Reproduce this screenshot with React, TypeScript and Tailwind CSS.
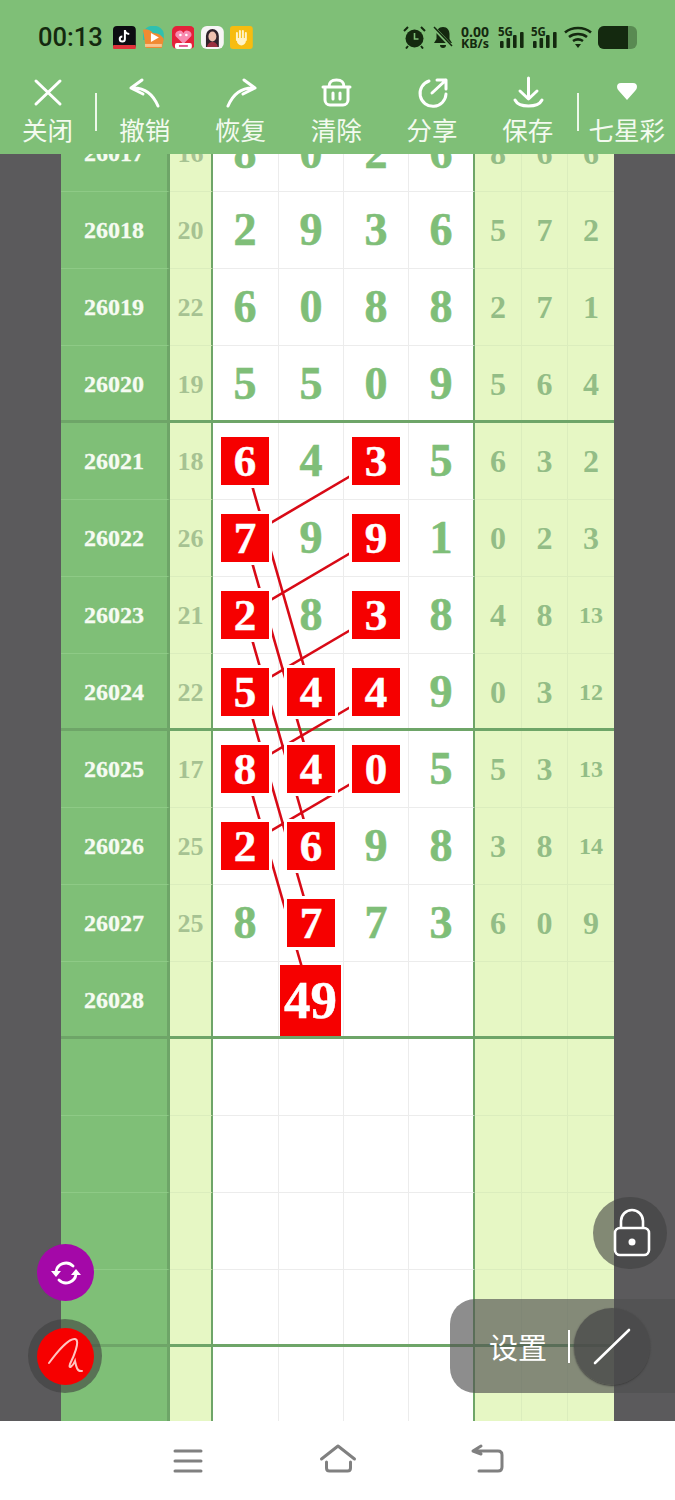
import React from 'react';

type Row = { id: string; sum: string; main: string[]; tail: string[]; thick?: boolean };

const rows: Row[] = [
  { id: '26017', sum: '16', main: ['8', '0', '2', '6'], tail: ['8', '6', '6'] },
  { id: '26018', sum: '20', main: ['2', '9', '3', '6'], tail: ['5', '7', '2'] },
  { id: '26019', sum: '22', main: ['6', '0', '8', '8'], tail: ['2', '7', '1'] },
  { id: '26020', sum: '19', main: ['5', '5', '0', '9'], tail: ['5', '6', '4'], thick: true },
  { id: '26021', sum: '18', main: ['6*', '4', '3*', '5'], tail: ['6', '3', '2'] },
  { id: '26022', sum: '26', main: ['7*', '9', '9*', '1'], tail: ['0', '2', '3'] },
  { id: '26023', sum: '21', main: ['2*', '8', '3*', '8'], tail: ['4', '8', '13'] },
  { id: '26024', sum: '22', main: ['5*', '4*', '4*', '9'], tail: ['0', '3', '12'], thick: true },
  { id: '26025', sum: '17', main: ['8*', '4*', '0*', '5'], tail: ['5', '3', '13'] },
  { id: '26026', sum: '25', main: ['2*', '6*', '9', '8'], tail: ['3', '8', '14'] },
  { id: '26027', sum: '25', main: ['8', '7*', '7', '3'], tail: ['6', '0', '9'] },
  { id: '26028', sum: '', main: ['', '49#', '', ''], tail: ['', '', ''], thick: true },
  { id: '', sum: '', main: ['', '', '', ''], tail: ['', '', ''] },
  { id: '', sum: '', main: ['', '', '', ''], tail: ['', '', ''] },
  { id: '', sum: '', main: ['', '', '', ''], tail: ['', '', ''] },
  { id: '', sum: '', main: ['', '', '', ''], tail: ['', '', ''], thick: true },
  { id: '', sum: '', main: ['', '', '', ''], tail: ['', '', ''] },
];

// centre to centre of the red boxes, in page coordinates
const links = [
  [245, 461, 311, 691],
  [245, 538, 311, 768],
  [245, 615, 311, 845],
  [245, 692, 311, 922],
  [245, 769, 311, 999],
  [376, 461, 245, 538],
  [376, 538, 245, 615],
  [376, 615, 245, 692],
  [376, 692, 245, 769],
  [376, 769, 245, 846],
];

const Main = ({ value, index }: { value: string; index: number }) => {
  const text = value.replace(/[*#]/, '');
  return (
    <div
      className={`flex items-center justify-center border-b border-b-[#ececec] bg-white font-bold ${
        index === 0 ? 'pr-px' : 'border-l border-l-[#ececec]'
      } ${index === 3 ? 'border-r-2 border-r-[#6ea568]' : ''}`}
    >
      {value.endsWith('*') && (
        <span className="relative z-20 flex h-12 w-12 items-center justify-center bg-[#f60000] text-[45px] leading-none text-white ring-[3px] ring-white [-webkit-text-stroke:0.5px_#fff]">
          {text}
        </span>
      )}
      {value.endsWith('#') && (
        <span className="relative z-20 -ml-px flex h-[71px] w-[61px] items-center justify-center bg-[#f60000] text-[53px] leading-none text-white [-webkit-text-stroke:0.5px_#fff]">
          {text}
        </span>
      )}
      {!/[*#]/.test(value) && (
        <span className="text-[46px] leading-none text-[#7fbe78] [-webkit-text-stroke:0.6px_#7fbe78]">{text}</span>
      )}
    </div>
  );
};

const Tail = ({ value, index }: { value: string; index: number }) => (
  <div
    className={`flex items-center justify-center border-b border-b-[#dbedbd] bg-[#e6f7c4] font-bold text-[#93bd86] ${
      index < 2 ? 'border-r border-r-[#dbedbd]' : ''
    } ${value.length > 1 ? 'text-[24px]' : 'text-[32px]'}`}
  >
    {value}
  </div>
);

const Tool = ({ label, children }: { label: string; children: React.ReactNode }) => (
  <div className="flex w-[95.75px] flex-col items-center">
    <svg width="34" height="34" viewBox="0 0 34 34" fill="none" stroke="#fff" strokeWidth="3" strokeLinecap="round" strokeLinejoin="round">
      {children}
    </svg>
    <span className="mt-[2px] text-[25.5px] leading-[34px] whitespace-nowrap text-[#f3faef]">{label}</span>
  </div>
);

const Signal = () => (
  <div className="flex w-[27px] flex-col">
    <span className="font-['Noto_Sans',sans-serif] text-[11.5px] leading-[9px] font-bold">5G</span>
    <svg width="27" height="16" viewBox="0 0 27 16" fill="#14290f" className="-mt-[4px]">
      <rect x="2" y="9" width="3.6" height="7" rx="1" />
      <rect x="8.500" y="6" width="3.6" height="10" rx="1" />
      <rect x="15" y="3" width="3.6" height="13" rx="1" />
      <rect x="22" y="0" width="3.6" height="16" rx="1" />
    </svg>
  </div>
);

const App = () => {
  return (
    <div className="relative flex h-[1500px] w-[675px] flex-col overflow-hidden bg-white font-['Noto_Sans_CJK_SC',sans-serif]">
      <header className="h-[154px] shrink-0 bg-[#7fbf77]">
        {/* status bar */}
        <div className="flex h-[74px] items-center pl-[38px] text-[#14290f]">
          <span className="w-[75px] font-['Roboto',sans-serif] text-[25.5px] font-medium">00:13</span>
          <div className="flex w-[140px] gap-[6.500px]">
            <svg width="23" height="23" viewBox="0 0 23 23">
              <rect width="23" height="23" rx="4" fill="#0c0c12" />
              <rect y="19" width="23" height="4" rx="1" fill="#e0303a" />
              <path d="M12 4v9a2.6 2.6 0 1 1-2.6-2.6M12 4c.4 2.6 2 3.8 4.4 4" fill="none" stroke="#fff" strokeWidth="2" />
            </svg>
            <svg width="23" height="23" viewBox="0 0 23 23">
              <path d="M1 8a10 8 0 0 1 21 0v6H1z" fill="#2fc0b0" />
              <path d="M1 4c2-2 8 0 10 3 6 0 9 3 11 6l-2 9H4z" fill="#f08a32" />
              <path d="M9 7l8 4.500-8 4.500z" fill="#fff" />
              <rect x="3" y="18" width="17" height="3" fill="#f9c48f" />
            </svg>
            <svg width="23" height="23" viewBox="0 0 23 23">
              <rect width="23" height="23" rx="5" fill="#e4213a" />
              <path d="M11.500 18 3.500 10a4.300 4.300 0 0 1 8-3 4.300 4.300 0 0 1 8 3z" fill="#f88ab0" />
              <circle cx="8.500" cy="9" r="1.300" fill="#fff" />
              <circle cx="14.500" cy="9" r="1.300" fill="#fff" />
              <rect x="3" y="17" width="17" height="6" rx="2" fill="#fff" />
              <rect x="7" y="19" width="9" height="2" fill="#e4568a" />
            </svg>
            <svg width="23" height="23" viewBox="0 0 23 23">
              <rect width="23" height="23" rx="6" fill="#f7f5f6" />
              <path d="M5 21V10a6.500 7 0 0 1 13 0v11z" fill="#30222c" />
              <ellipse cx="11.500" cy="10.500" rx="4" ry="5" fill="#eec0b0" />
              <path d="M6 21c1-4 3-5 5.500-5s4.500 1 5.500 5z" fill="#9a3040" />
            </svg>
            <svg width="23" height="23" viewBox="0 0 23 23">
              <rect width="23" height="23" rx="3" fill="#f7bc10" />
              <path d="M7 7v7M10 5v9M13 5v9M16 7v7" stroke="#fff3c8" strokeWidth="2" strokeLinecap="round" />
              <path d="M7 12h9v3a4.500 4.500 0 0 1-9 0z" fill="#fff3c8" />
            </svg>
          </div>
          <div className="ml-[150px] flex items-center">
            <svg width="23" height="23" viewBox="0 0 23 23">
              <circle cx="11.500" cy="12.500" r="9" fill="#14290f" />
              <path d="M1 5l4-4M22 5l-4-4M5 20l-2 2.500M18 20l2 2.500" stroke="#14290f" strokeWidth="2" />
              <path d="M11.500 7v6h4" fill="none" stroke="#7fbf77" strokeWidth="1.600" />
            </svg>
            <svg width="22" height="23" viewBox="0 0 22 23" className="ml-[6px]">
              <path d="M11 1c4.500 0 6.500 3.500 6.500 7v5l2.500 4H2l2.500-4V8C4.500 4.500 6.500 1 11 1z" fill="#14290f" />
              <path d="M8 19h6a3 3 0 0 1-6 0z" fill="#14290f" />
              <path d="M2 2l18 19" stroke="#7fbf77" strokeWidth="3.500" />
              <path d="M2 1l18 19" stroke="#14290f" strokeWidth="1.500" />
            </svg>
            <div className="ml-[6px] flex w-[30px] flex-col items-center font-['Noto_Sans',sans-serif] font-bold">
              <span className="text-[14px] leading-[13px]">0.00</span>
              <span className="text-[12.5px] leading-[12px]">KB/s</span>
            </div>
            <div className="ml-[8px] flex gap-[6px]">
              <Signal />
              <Signal />
            </div>
            <svg width="28" height="24" viewBox="0 0 28 24" className="ml-[6px]" fill="none" stroke="#14290f" strokeWidth="2.600">
              <path d="M1 7.500c7-6 19-6 26 0M5 12c5-4 13-4 18 0M9 16c3-2 7-2 10 0" />
              <path d="M11 19h6l-3 4z" fill="#14290f" stroke="none" />
            </svg>
            <svg width="39" height="23" viewBox="0 0 39 23" className="ml-[6px]">
              <rect width="39" height="23" rx="6" fill="#14290f" fillOpacity="0.35" />
              <path d="M6 0h24v23H6a6 6 0 0 1-6-6V6a6 6 0 0 1 6-6z" fill="#14290f" />
            </svg>
          </div>
        </div>

        {/* toolbar */}
        <div className="flex pt-[2px]">
          <div className="flex w-[95px] flex-col items-center">
            <svg width="34" height="34" viewBox="0 0 34 34" fill="none" stroke="#fff" strokeWidth="3" strokeLinecap="round">
              <path d="M5 5l24 23M29 5L5 28" />
            </svg>
            <span className="mt-[2px] text-[25.5px] leading-[34px] text-[#f3faef]">关闭</span>
          </div>
          <div className="mt-[17px] h-[38px] w-[2px] bg-[#eef8ea]" />
          <Tool label="撤销">
            <path d="M14 4L3 12l12 6M3 12c13-1 22 6 27 18" />
          </Tool>
          <Tool label="恢复">
            <path d="M20 4l11 8-12 6M31 12C18 11 9 18 4 30" />
          </Tool>
          <Tool label="清除">
            <path d="M4 11h27M10 11c0-6 3-7 7.500-7s7.500 1 7.500 7M6 11v13a5 5 0 0 0 5 5h13a5 5 0 0 0 5-5V11M14 17v6M21 17v6" />
          </Tool>
          <Tool label="分享">
            <path d="M14 5A13 13 0 1 0 31 18M17 17L31 4M22 4h9v9" />
          </Tool>
          <Tool label="保存">
            <path d="M17.500 2v20M9 15l8.500 8 8.500-8M4 24c4 8 23 8 27 0" />
          </Tool>
          <div className="mt-[17px] ml-px h-[38px] w-[2px] bg-[#eef8ea]" />
          <div className="flex w-[96px] flex-col items-center">
            <svg width="34" height="34" viewBox="0 0 34 34" fill="#fff">
              <path d="M7 11q0-4 4-4h12q4 0 4 4 0 2-2 4l-8 9-8-9q-2-2-2-4z" />
            </svg>
            <span className="mt-[2px] text-[25.5px] leading-[34px] whitespace-nowrap text-[#f3faef]">七星彩</span>
          </div>
        </div>
      </header>

      <main className="h-[1267px] shrink-0 overflow-hidden bg-[#5b5a5c] font-['Liberation_Serif',serif]">
        <div className="relative -mt-[39px]">
          {rows.map((row, i) => (
            <div
              key={i}
              className={`relative ml-[61px] grid h-[77px] w-[553px] grid-cols-[109px_43px_65px_65px_65px_67px_47px_46px_46px] ${
                row.thick ? "after:absolute after:inset-x-0 after:bottom-0 after:h-[3px] after:bg-[#6ea568] after:content-['']" : ''
              }`}
            >
              <div className="flex items-center justify-center border-r-[3px] border-b border-r-[#6ea568] border-b-[#8eca86] bg-[#7fbf77] text-[24px] font-bold text-[#f6fbf2] [-webkit-text-stroke:0.3px_#f6fbf2]">
                {row.id}
              </div>
              <div className="flex items-center justify-center border-r-2 border-b border-r-[#6ea568] border-b-[#dbedbd] bg-[#e6f7c4] text-[26px] font-bold text-[#a6c292]">
                {row.sum}
              </div>
              {row.main.map((value, j) => (
                <Main key={j} value={value} index={j} />
              ))}
              {row.tail.map((value, j) => (
                <Tail key={j} value={value} index={j} />
              ))}
            </div>
          ))}
          {/* trend lines, under the boxes */}
          <svg className="absolute top-0 left-0 z-10" width="675" height="1309" viewBox="0 115 675 1309">
            {links.map(([x1, y1, x2, y2], i) => (
              <line key={i} x1={x1} y1={y1} x2={x2} y2={y2} stroke="#d80a16" strokeWidth="2.600" />
            ))}
          </svg>
        </div>
      </main>

      <nav className="flex h-[79px] shrink-0 items-center justify-center">
        <div className="flex w-[150px] justify-center">
          <svg width="40" height="40" viewBox="0 0 40 40" fill="none" stroke="#808080" strokeWidth="3" strokeLinecap="round">
            <path d="M7 10h26M7 20h26M7 30h26" />
          </svg>
        </div>
        <div className="flex w-[150px] justify-center">
          <svg width="40" height="40" viewBox="0 0 40 40" fill="none" stroke="#808080" strokeWidth="3" strokeLinecap="round" strokeLinejoin="round">
            <path d="M3.500 18L20 5l16.500 13M8.500 21v6q0 3 3 3h18q3 0 3-3v-6" />
          </svg>
        </div>
        <div className="flex w-[150px] justify-center">
          <svg width="40" height="40" viewBox="0 0 40 40" fill="none" stroke="#808080" strokeWidth="3" strokeLinecap="round" strokeLinejoin="round">
            <path d="M13 5L5 10l8 3M5 10h25q4 0 4 4v12q0 4-4 4H11" />
          </svg>
        </div>
      </nav>

      {/* floating buttons */}
      <button className="absolute top-[1244px] left-[37px] z-30 flex h-[57px] w-[57px] items-center justify-center rounded-full bg-[#a408a8]">
        <svg width="32" height="32" viewBox="0 0 32 32" fill="none" stroke="#fff" strokeWidth="2.800" strokeLinecap="round">
          <path d="M6 15a10 10 0 0 1 17-6M26 17a10 10 0 0 1-17 6" />
          <path d="M1 14h10l-5 6zM31 18H21l5-6z" fill="#fff" stroke="none" />
        </svg>
      </button>
      <div className="absolute top-[1319px] left-[28px] z-30 flex h-[74px] w-[74px] items-center justify-center rounded-full bg-[#404040]/60">
        <div className="h-[57px] w-[57px] rounded-full bg-[#f60000]">
          <svg width="57" height="57" viewBox="0 0 57 57" fill="none" stroke="#ffc4c0" strokeWidth="2" strokeLinecap="round">
            <path d="M12 35C20 24 32 10 38 11c6 1-2 19-5 25-2 6 3 2 5-3 1 5 2 11 7 10" />
          </svg>
        </div>
      </div>
      <div className="absolute top-[1197px] left-[593px] z-30 flex h-[72px] w-[74px] items-center justify-center rounded-full bg-[#404040]/60 pl-[4px]">
        <svg width="40" height="50" viewBox="0 0 40 50" fill="none" stroke="#fff" strokeWidth="2.600">
          <rect x="3" y="20" width="34" height="27" rx="5" />
          <path d="M9 20v-7a11 11 0 0 1 22 0v7" />
          <circle cx="20" cy="34" r="3.500" fill="#fff" stroke="none" />
        </svg>
      </div>
      <div className="absolute top-[1299px] left-[450px] z-30 flex h-[94px] w-[225px] items-center rounded-l-[25px] bg-[#505050]/65 pl-[39px]">
        <span className="text-[29px] leading-none text-white">设置</span>
        <span className="ml-[21px] h-[33px] w-[2px] bg-white" />
        <div className="ml-[4px] flex h-[77px] w-[76px] items-center justify-center rounded-full bg-[#4a4a4a]/80 shadow-[0_1px_2px_#3c3c3c]">
          <svg width="40" height="40" viewBox="0 0 40 40" stroke="#fff" strokeWidth="2.600" strokeLinecap="round">
            <path d="M3 37L37 4" />
          </svg>
        </div>
      </div>
    </div>
  );
};

export default App;
